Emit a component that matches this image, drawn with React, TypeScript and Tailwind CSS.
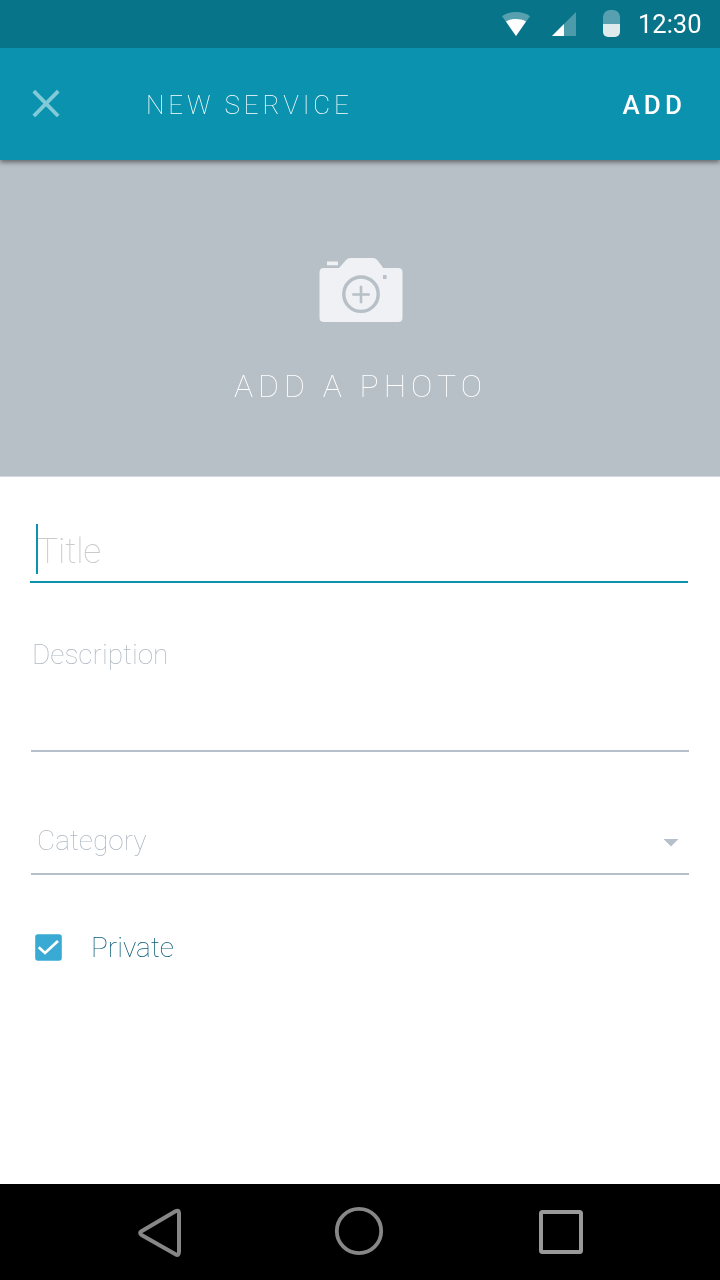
function StatusBar() {
  return (
    <div className="relative z-20 flex h-12 bg-[#077489] pl-[500px] text-white">
      <svg width="138" height="48" viewBox="500 0 138 48" className="shrink-0">
        <path d="M502 16.2C506 13.3 511 12 516 12s10 1.300 14 4.200L516 36Z" fill="#fff" fillOpacity=".32" />
        <path d="M506 21.500C509 19.700 512.500 19 516 19s7 .7 10 2.500L516 36Z" fill="#fff" />
        <path d="M576 12v24h-24Z" fill="#fff" fillOpacity=".28" />
        <path d="M564 24v12h-12Z" fill="#fff" />
        <path d="M603 24v-7a7 7 0 0 1 7-7h3a7 7 0 0 1 7 7v7Z" fill="#fff" fillOpacity=".32" />
        <path d="M603 24h17v8a5 5 0 0 1-5 5h-7a5 5 0 0 1-5-5Z" fill="#dfeaec" />
      </svg>
      <span className="text-[25.500px] leading-[48px]">12:30</span>
    </div>
  );
}

function AppBar() {
  return (
    <header className="relative z-10 flex h-28 bg-[#0a92ae] pl-8 shadow-[0_2px_5px_rgba(0,0,0,0.5)]">
      <button aria-label="Close" className="mt-[41px] h-7 w-7">
        <svg width="28" height="28" viewBox="0 0 28 28" className="block">
          <path d="M1.800 2.200 26.200 27M26.200 2.200 1.800 27" stroke="#83cad9" strokeWidth="3.800" fill="none" />
        </svg>
      </button>
      <h1 className="ml-[86px] mt-px grow whitespace-nowrap text-[26px] leading-[112px] font-thin tracking-[3.900px] text-white">
        NEW SERVICE
      </h1>
      <button className="mr-[34px] mt-px text-[26px] leading-[112px] font-[480] tracking-[4.100px] text-white">ADD</button>
    </header>
  );
}

function PhotoPicker() {
  return (
    <button className="flex h-[317px] flex-col items-center border-b border-[#d3d9de] bg-[#b7bfc7] pt-[97px]">
      <svg width="84" height="66" viewBox="319 257 84 66" className="ml-0.5 shrink-0">
        <path
          d="M323.800 268H339L346 260q1.800-2 4.500-2h22q3 0 4.800 2l6 8h14.900q4.300 0 4.300 4.300v45.400q0 4.300-4.300 4.300h-74.400q-4.300 0-4.300-4.300v-45.400q0-4.300 4.300-4.300Z"
          fill="#eff1f4"
        />
        <rect x="327" y="261.500" width="11" height="3.800" fill="#eff1f4" />
        <rect x="383" y="275" width="3.500" height="4" fill="#b7bfc7" />
        <circle cx="361" cy="294.200" r="17.200" fill="none" stroke="#b7bfc7" strokeWidth="3.400" />
        <path d="M352.300 294.500h17.400M361 285.800v17.400" stroke="#b7bfc7" strokeWidth="2.600" />
      </svg>
      <span className="ml-px mt-[43px] whitespace-nowrap text-[32px] leading-[41px] font-thin tracking-[5px] text-white">
        ADD A PHOTO
      </span>
    </button>
  );
}

function ServiceForm() {
  return (
    <form className="flex grow flex-col pl-[30px]">
      <div className="mt-[47px] flex h-[59px] w-[658px] border-b-2 border-[#0a92ae] pl-1.5">
        <span className="h-[50px] w-0.5 bg-[#0a92ae]" />
        <span className="-ml-px text-[35.500px] leading-[54px] font-thin tracking-[-0.200px] text-[#cacaca]">Title</span>
      </div>
      <div className="ml-px mt-[47px] h-[122px] w-[658px] border-b-2 border-[#b5c0ca] pl-px text-[28px] leading-[50px] font-thin text-[#b0b9c3]">
        Description
      </div>
      <div className="ml-px mt-[61px] flex h-[62px] w-[658px] items-start justify-between border-b-2 border-[#b5c0ca] pl-1.5 pr-[10px]">
        <span className="text-[28px] leading-[56px] font-thin text-[#b0b9c3]">Category</span>
        <svg width="16" height="8" viewBox="0 0 16 8" className="mt-[26px]">
          <path d="M.5 0h15L8 7.500Z" fill="#b5c0ca" />
        </svg>
      </div>
      <label className="ml-[5px] mt-[52px] flex h-10 items-center">
        <svg width="27" height="27" viewBox="0 0 27 27">
          <rect x=".2" y=".2" width="26.600" height="26.600" rx="2.800" fill="#39aad3" />
          <path d="m3.700 13.300 6.300 5.700L23 7" stroke="#fff" strokeWidth="2.700" fill="none" />
        </svg>
        <span className="ml-[29px] pt-0.5 text-[28px] leading-10 font-thin text-[#085b78]">Private</span>
      </label>
    </form>
  );
}

function NavigationBar() {
  return (
    <nav className="flex h-24 bg-black pl-[137px]">
      <svg width="46" height="96" viewBox="137 1184 46 96">
        <path
          d="M175.500 1211.300Q179 1209.500 179 1213V1251.500Q179 1256.500 175.500 1254.300L141.500 1235Q138.800 1233 141.500 1231.300Z"
          fill="none"
          stroke="#878787"
          strokeWidth="4"
          strokeLinejoin="round"
        />
      </svg>
      <svg width="50" height="96" viewBox="334 1184 50 96" className="ml-[151px]">
        <circle cx="359" cy="1231" r="22.200" fill="none" stroke="#878787" strokeWidth="3.800" />
      </svg>
      <svg width="46" height="96" viewBox="538 1184 46 96" className="ml-[154px]">
        <rect x="541" y="1212" width="40" height="40" rx="1.500" fill="none" stroke="#999" strokeWidth="4" />
      </svg>
    </nav>
  );
}

export default function App() {
  return (
    <div className="flex h-[1280px] w-[720px] flex-col overflow-hidden bg-white font-[Roboto,sans-serif] antialiased will-change-transform">
      <StatusBar />
      <AppBar />
      <PhotoPicker />
      <ServiceForm />
      <NavigationBar />
    </div>
  );
}
